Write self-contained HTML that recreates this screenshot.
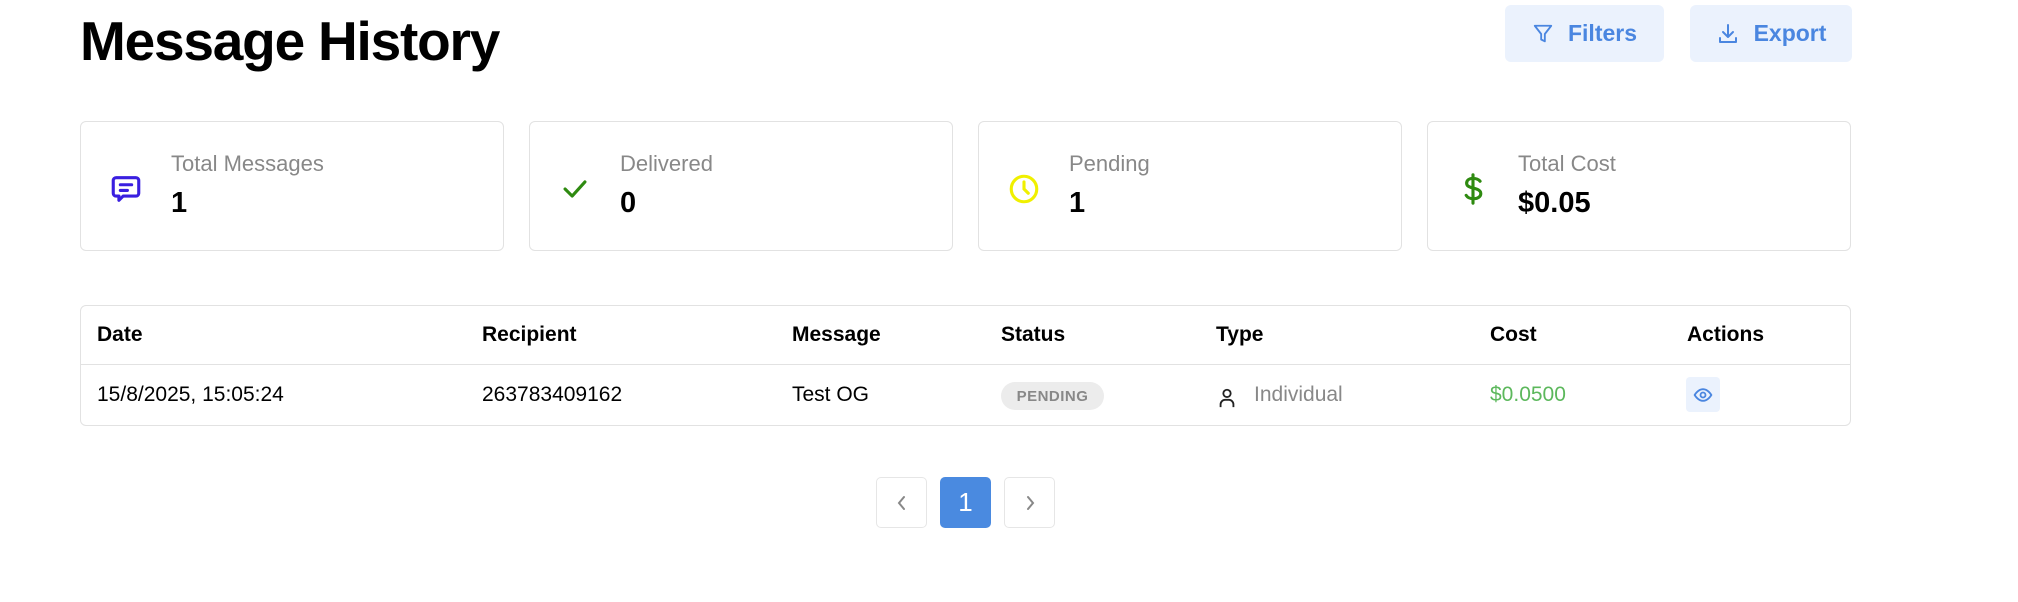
<!DOCTYPE html>
<html><head><style>
*{margin:0;padding:0;box-sizing:border-box}
body{width:2018px;height:602px;background:#fff;font-family:"Liberation Sans",sans-serif;position:relative;overflow:hidden;color:#000}
.abs{position:absolute}
h1{position:absolute;left:80px;top:9px;font-size:55px;font-weight:700;letter-spacing:-1.2px}
.btn{position:absolute;top:5px;height:57px;background:#ebf2fd;border-radius:6px;color:#4a86e0;font-size:23px;font-weight:600;display:flex;align-items:center;justify-content:center;gap:14px}
.card{position:absolute;top:121px;width:424px;height:130px;border:1px solid #e2e2e2;border-radius:6px}
.card svg{position:absolute;left:28px;top:50px}
.lab{position:absolute;left:90px;top:29px;font-size:22px;color:#888}
.val{position:absolute;left:90px;top:65px;font-size:29px;font-weight:700}
.tbl{position:absolute;left:80px;top:305px;width:1771px;height:121px;border:1px solid #e2e2e2;border-radius:6px}
.hr{position:absolute;left:0;right:0;top:58px;border-top:1px solid #e2e2e2}
.th{position:absolute;top:17px;font-size:21px;font-weight:700}
.td{position:absolute;top:77px;font-size:21px}
.pg{position:absolute;top:477px;width:51px;height:51px;border:1px solid #e6e6e6;border-radius:5px;display:flex;align-items:center;justify-content:center;color:#888;font-size:22px}
</style></head><body>
<h1>Message History</h1>
<div class="btn" style="left:1505px;width:159px"><svg width="22" height="24" viewBox="0 0 24 24" fill="none" stroke="#4a86e0" stroke-width="2" stroke-linejoin="round"><path d="M3 3h18l-7 9v8l-4-2v-6z"/></svg>Filters</div>
<div class="btn" style="left:1690px;width:162px"><svg width="24" height="24" viewBox="0 0 24 24" fill="none" stroke="#4a86e0" stroke-width="2" stroke-linecap="round" stroke-linejoin="round"><path d="M12 3v12M7 10l5 5 5-5M4 16v4h16v-4"/></svg>Export</div>

<div class="card" style="left:80px"><svg width="34" height="34" viewBox="0 0 24 24" fill="none" stroke="#3a1fe0" stroke-width="2.2" stroke-linecap="round" stroke-linejoin="round"><path d="M5 4h14a2 2 0 0 1 2 2v9a2 2 0 0 1-2 2h-9l-3 3v-3H5a2 2 0 0 1-2-2V6a2 2 0 0 1 2-2zM8 9h8M8 13h5"/></svg><div class="lab">Total Messages</div><div class="val">1</div></div>
<div class="card" style="left:529px"><svg width="34" height="34" viewBox="0 0 24 24" fill="none" stroke="#2e8a10" stroke-width="2.2" stroke-linecap="round" stroke-linejoin="round"><path d="M5 12l5 5 9-10"/></svg><div class="lab">Delivered</div><div class="val">0</div></div>
<div class="card" style="left:978px"><svg width="34" height="34" viewBox="0 0 24 24" fill="none" stroke="#f0f000" stroke-width="2.2" stroke-linecap="round"><circle cx="12" cy="12" r="9"/><path d="M12 7v5l3 3"/></svg><div class="lab">Pending</div><div class="val">1</div></div>
<div class="card" style="left:1427px"><svg width="34" height="34" viewBox="0 0 24 24" fill="none" stroke="#2e8a10" stroke-width="2.2" stroke-linecap="round"><path d="M12 2v20M17 6.5c-1-1.2-2.8-2-5-2-2.8 0-4.5 1.4-4.5 3.4 0 4.6 10 2.4 10 7.4 0 2-2 3.6-5 3.6-2.4 0-4.4-.9-5.3-2.4"/></svg><div class="lab">Total Cost</div><div class="val">$0.05</div></div>

<div class="tbl">
<div class="th" style="left:16px">Date</div>
<div class="th" style="left:401px">Recipient</div>
<div class="th" style="left:711px">Message</div>
<div class="th" style="left:920px">Status</div>
<div class="th" style="left:1135px">Type</div>
<div class="th" style="left:1409px">Cost</div>
<div class="th" style="left:1606px">Actions</div>
<div class="hr"></div>
<div class="td" style="left:16px">15/8/2025, 15:05:24</div>
<div class="td" style="left:401px;font-weight:500">263783409162</div>
<div class="td" style="left:711px">Test OG</div>
<div class="abs" style="left:920px;top:76px;width:103px;height:28px;border-radius:14px;background:#ececec;color:#888;font-size:15px;font-weight:700;display:flex;align-items:center;justify-content:center;letter-spacing:.5px">PENDING</div>
<svg class="abs" style="left:1135px;top:80px" width="22" height="24" viewBox="0 0 24 24" fill="none" stroke="#222" stroke-width="2"><circle cx="12" cy="7" r="4"/><path d="M5 22v-3a5 5 0 0 1 5-5h4a5 5 0 0 1 5 5v3"/></svg>
<div class="td" style="left:1173px;color:#888">Individual</div>
<div class="td" style="left:1409px;color:#5cb85c;font-weight:500">$0.0500</div>
<div class="abs" style="left:1605px;top:71px;width:34px;height:35px;border-radius:4px;background:#ebf2fd;display:flex;align-items:center;justify-content:center"><svg width="20" height="20" viewBox="0 0 24 24" fill="none" stroke="#4a86e0" stroke-width="2.2"><path d="M2 12s4-7 10-7 10 7 10 7-4 7-10 7S2 12 2 12z"/><circle cx="12" cy="12" r="3"/></svg></div>
</div>

<div class="pg" style="left:876px"><svg width="16" height="20" viewBox="0 0 16 20" fill="none" stroke="#888" stroke-width="2" stroke-linecap="round"><path d="M10 4l-5 6 5 6"/></svg></div>
<div class="pg" style="left:940px;background:#4a8ae0;border-color:#4a8ae0;color:#fff;font-size:26px">1</div>
<div class="pg" style="left:1004px"><svg width="16" height="20" viewBox="0 0 16 20" fill="none" stroke="#888" stroke-width="2" stroke-linecap="round"><path d="M6 4l5 6-5 6"/></svg></div>
</body></html>
